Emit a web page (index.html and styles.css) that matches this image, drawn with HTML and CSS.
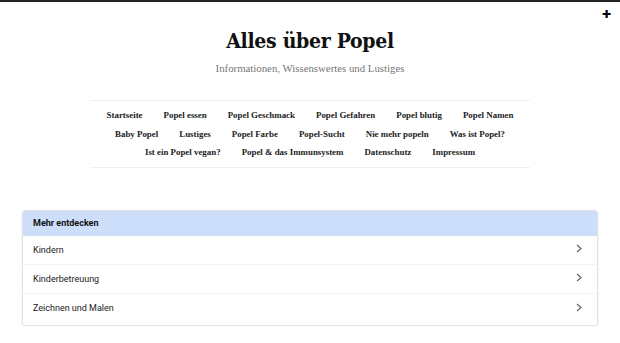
FILE: index.html
```html
<!DOCTYPE html>
<html lang="de">

<head>
    <meta charset="UTF-8">
    <meta name="viewport" content="width=device-width, initial-scale=1.0">
    <title>Alles über Popel</title>
    <link rel="stylesheet" href="styles.css">
</head>

<body>
    <div class="topbar"></div>
    <header class="site-head">
        <span class="plus">&#10010;</span>
        <h1 class="title">Alles über Popel</h1>
        <p class="tagline">Informationen, Wissenswertes und Lustiges</p>
    </header>

    <nav class="menu">
        <ul class="menu-list">
            <li><a href="#">Startseite</a></li>
            <li><a href="#">Popel essen</a></li>
            <li><a href="#">Popel Geschmack</a></li>
            <li><a href="#">Popel Gefahren</a></li>
            <li><a href="#">Popel blutig</a></li>
            <li><a href="#">Popel Namen</a></li>
            <li><a href="#">Baby Popel</a></li>
            <li><a href="#">Lustiges</a></li>
            <li><a href="#">Popel Farbe</a></li>
            <li><a href="#">Popel-Sucht</a></li>
            <li><a href="#">Nie mehr popeln</a></li>
            <li><a href="#">Was ist Popel?</a></li>
            <li><a href="#">Ist ein Popel vegan?</a></li>
            <li><a href="#">Popel &amp; das Immunsystem</a></li>
            <li><a href="#">Datenschutz</a></li>
            <li><a href="#">Impressum</a></li>
        </ul>
    </nav>

    <section class="discover">
        <div class="discover-head">Mehr entdecken</div>
        <a class="discover-row" href="#"><span>Kindern</span>
            <svg class="chev" width="6" height="9" viewBox="0 0 6 9"><polyline points="1,1 5,4.5 1,8" fill="none" stroke="#666" stroke-width="1.2"/></svg></a>
        <a class="discover-row" href="#"><span>Kinderbetreuung</span>
            <svg class="chev" width="6" height="9" viewBox="0 0 6 9"><polyline points="1,1 5,4.5 1,8" fill="none" stroke="#666" stroke-width="1.2"/></svg></a>
        <a class="discover-row" href="#"><span>Zeichnen und Malen</span>
            <svg class="chev" width="6" height="9" viewBox="0 0 6 9"><polyline points="1,1 5,4.5 1,8" fill="none" stroke="#666" stroke-width="1.2"/></svg></a>
    </section>
</body>

</html>
```

FILE: styles.css
```css
* {
    margin: 0;
    padding: 0;
    box-sizing: border-box;
}

body {
    background-color: #ffffff;
    color: #111111;
    font-family: 'DejaVu Serif', serif;
}

.topbar {
    height: 2px;
    background-color: #222222;
}

.site-head {
    position: relative;
    text-align: center;
    padding-top: 24px;
}

.plus {
    position: absolute;
    top: 6px;
    right: 9px;
    font-family: 'DejaVu Sans', sans-serif;
    font-size: 11px;
    color: #000000;
}

.title {
    font-family: 'DejaVu Serif', serif;
    font-stretch: condensed;
    font-weight: bold;
    font-size: 21px;
    line-height: 30px;
    letter-spacing: -0.3px;
    color: #111111;
}

.tagline {
    margin-top: 6px;
    font-family: 'Liberation Serif', serif;
    font-size: 10.8px;
    color: #777777;
}

.menu {
    width: 440px;
    margin: 26px auto 0;
    padding: 5px 0 5px;
    border-top: 1px solid #f0f0f0;
    border-bottom: 1px solid #f0f0f0;
}

.menu-list {
    list-style: none;
    display: flex;
    flex-wrap: wrap;
    justify-content: center;
    column-gap: 21px;
}

.menu-list a {
    display: block;
    font-family: 'Liberation Serif', serif;
    font-weight: bold;
    font-size: 8.9px;
    line-height: 18.5px;
    color: #222222;
    text-decoration: none;
}

.discover {
    margin: 42px 22px 0;
    border: 1px solid #e3e3e3;
    border-radius: 3px;
    box-shadow: 0 1px 2px rgba(0, 0, 0, 0.12);
    overflow: hidden;
    font-family: Roboto, 'Liberation Sans', sans-serif;
}

.discover-head {
    height: 25px;
    padding-left: 10px;
    display: flex;
    align-items: center;
    background-color: #cddefa;
    font-size: 9px;
    font-weight: bold;
    color: #111111;
}

.discover-row {
    height: 29px;
    padding: 0 15px 0 10px;
    display: flex;
    align-items: center;
    justify-content: space-between;
    border-bottom: 1px solid #f2f2f2;
    font-size: 9px;
    color: #222222;
    text-decoration: none;
}

.discover-row:last-child {
    border-bottom: none;
    height: 31px;
    padding-bottom: 2px;
}

.chev {
    margin-top: -2px;
}
```
